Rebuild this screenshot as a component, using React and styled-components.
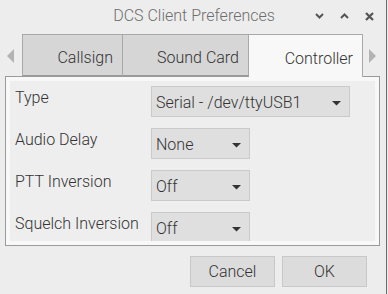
import styled, { createGlobalStyle } from "styled-components";

const GlobalStyle = createGlobalStyle`
  html, body {
    margin: 0;
    padding: 0;
    background: #ededed;
  }
  body {
    font-family: Roboto, "Liberation Sans", sans-serif;
    color: #3c3c3c;
  }
`;

const rows = [
  { label: "Type", value: "Serial - /dev/ttyUSB1", wide: true },
  { label: "Audio Delay", value: "None" },
  { label: "PTT Inversion", value: "Off" },
  { label: "Squelch Inversion", value: "Off" },
];

const tabs = [
  { name: "Callsign", width: 101 },
  { name: "Sound Card", width: 126 },
  { name: "Controller", width: 114, active: true },
];

function Caret() {
  return (
    <CaretSvg width="9" height="5" viewBox="0 0 9 5">
      <path d="M0 0 L9 0 L4.5 4.5 Z" fill="#333" />
    </CaretSvg>
  );
}

export default function App() {
  return (
    <>
      <GlobalStyle />
      <Window>
        <TitleBar>
          <span />
          <Title>DCS Client Preferences</Title>
          <Controls>
            <svg width="9" height="6" viewBox="0 0 9 6">
              <path d="M1 1 L4.5 4.5 L8 1" stroke="#555" strokeWidth="2" fill="none" />
            </svg>
            <svg width="9" height="6" viewBox="0 0 9 6">
              <path d="M1 5 L4.5 1.5 L8 5" stroke="#555" strokeWidth="2" fill="none" />
            </svg>
            <svg width="9" height="9" viewBox="0 0 9 9">
              <path d="M1 1 L8 8 M8 1 L1 8" stroke="#555" strokeWidth="2.2" fill="none" />
            </svg>
          </Controls>
        </TitleBar>

        <TabRow>
          <Arrow>
            <svg width="8" height="14" viewBox="0 0 8 14">
              <path d="M7 0 L0 7 L7 14 Z" fill="#b3b3b3" />
            </svg>
          </Arrow>
          {tabs.map((t) => (
            <Tab key={t.name} $w={t.width} $active={t.active}>
              {t.name}
            </Tab>
          ))}
          <Arrow>
            <svg width="8" height="14" viewBox="0 0 8 14">
              <path d="M1 0 L8 7 L1 14 Z" fill="#b3b3b3" />
            </svg>
          </Arrow>
        </TabRow>

        <Panel>
          <Content>
            {rows.map((r) => (
              <Row key={r.label}>
                <Label>{r.label}</Label>
                <Combo $wide={r.wide}>
                  <span>{r.value}</span>
                  <Caret />
                </Combo>
              </Row>
            ))}
          </Content>
        </Panel>

        <Footer>
          <Button>Cancel</Button>
          <Button>OK</Button>
        </Footer>
      </Window>
    </>
  );
}

const Window = styled.div`
  width: 386px;
  height: 294px;
  border-right: 1px solid #6a6a6a;
  display: flex;
  flex-direction: column;
  overflow: hidden;
`;

const TitleBar = styled.div`
  height: 34px;
  display: grid;
  grid-template-columns: 1fr auto 1fr;
  align-items: center;
  padding-bottom: 4px;
  box-sizing: border-box;
`;

const Title = styled.div`
  font-size: 16px;
  font-weight: 300;
  color: #6e6e6e;
  padding-left: 2px;
`;

const Controls = styled.div`
  display: flex;
  justify-content: flex-end;
  align-items: center;
  gap: 16px;
  padding-right: 12px;
  padding-top: 2px;
`;

const TabRow = styled.div`
  height: 42px;
  display: flex;
  align-items: stretch;
  position: relative;
  z-index: 1;
`;

const Arrow = styled.div`
  width: 22px;
  display: flex;
  align-items: center;
  justify-content: center;
  padding-top: 2px;
  box-sizing: border-box;
  &:last-child {
    width: 18px;
    justify-content: flex-start;
    padding-left: 5px;
  }
`;

const Tab = styled.div`
  width: ${(p) => p.$w}px;
  box-sizing: border-box;
  display: flex;
  align-items: center;
  justify-content: flex-end;
  padding: 4px 9px 0 0;
  font-size: 16px;
  font-weight: 300;
  color: #333;
  border: 1px solid #a9a9a9;
  border-left-width: ${(p) => (p.$active ? 0 : 1)}px;
  border-bottom: ${(p) => (p.$active ? "none" : "1px solid #9a9a9a")};
  background: ${(p) => (p.$active ? "#f8f8f8" : "#d6d6d6")};
  height: ${(p) => (p.$active ? 43 : 42)}px;
  margin-bottom: ${(p) => (p.$active ? -1 : 0)}px;
  & + & {
    border-left-width: 0;
  }
`;

const Panel = styled.div`
  margin-left: 5px;
  width: 375px;
  height: 170px;
  box-sizing: border-box;
  border: 1px solid #9a9a9a;
  background: #f8f8f8;
  padding: 4px;
`;

const Content = styled.div`
  height: 100%;
  background: #eeeeee;
  overflow: hidden;
  padding-top: 5px;
  box-sizing: border-box;
`;

const Row = styled.div`
  display: grid;
  grid-template-columns: 141px auto;
  height: 42px;
  align-items: start;
`;

const Label = styled.div`
  padding-left: 5px;
  font-size: 16px;
  font-weight: 300;
  line-height: 24px;
  color: #333;
`;

const Combo = styled.div`
  width: ${(p) => (p.$wide ? 199 : 99)}px;
  height: 31px;
  box-sizing: border-box;
  border: 1px solid #cacaca;
  background: #dfdfdf;
  display: flex;
  align-items: center;
  justify-content: space-between;
  padding: 2px 8px 0 4px;
  font-size: 16px;
  font-weight: 300;
  color: #333;
`;

const CaretSvg = styled.svg`
  flex: none;
  margin-top: 2px;
`;

const Footer = styled.div`
  display: flex;
  justify-content: flex-end;
  gap: 7px;
  padding: 10px 19px 0 0;
`;

const Button = styled.button`
  width: 85px;
  height: 31px;
  box-sizing: border-box;
  border: 1px solid #c8c8c8;
  background: #dcdcdc;
  font-family: inherit;
  font-size: 16px;
  font-weight: 300;
  color: #333;
  padding: 0;
`;
